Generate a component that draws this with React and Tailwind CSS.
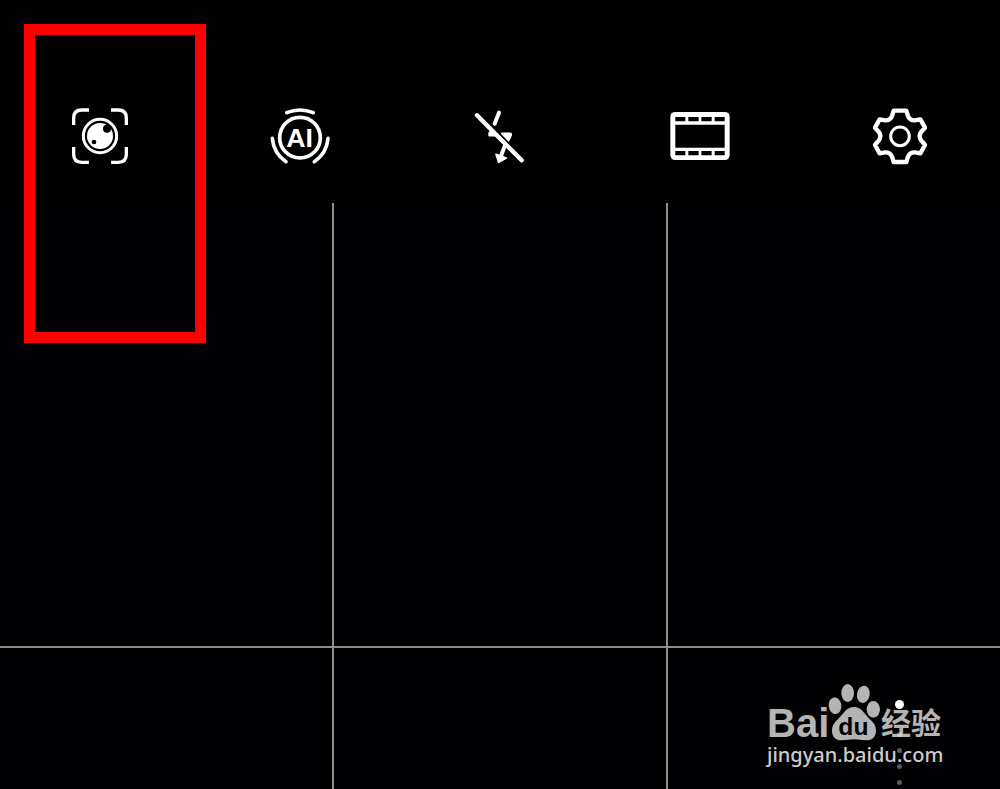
function LensIcon() {
  return (
    <svg viewBox="0 0 240 240" className="size-20" fill="none" stroke="#fff">
      <path
        strokeWidth="10"
        d="M41 87V66Q41 42 65 42H87M153 42H175Q199 42 199 66V87M199 153V175Q199 199 175 199H153M87 199H65Q41 199 41 175V153"
      />
      <circle cx="120" cy="120" r="50" strokeWidth="9" />
      <circle cx="120" cy="120" r="39" fill="#fff" stroke="none" />
      <circle cx="141" cy="98" r="12" fill="#000" stroke="none" />
      <circle cx="102" cy="138" r="7" fill="#000" stroke="none" />
    </svg>
  );
}

function AiIcon() {
  return (
    <svg viewBox="0 0 240 240" className="size-20" fill="none" stroke="#fff" strokeLinecap="round">
      <circle cx="120" cy="125" r="61" strokeWidth="11" />
      <path strokeWidth="11" d="M80 50Q120 34 160 50M37 127Q41 172 78 197M204 127Q200 172 163 197" />
      <text
        x="119"
        y="153"
        fill="#fff"
        stroke="none"
        fontSize="80"
        textAnchor="middle"
        className="font-['Liberation_Sans',sans-serif] font-bold"
      >
        AI
      </text>
    </svg>
  );
}

function FlashOffIcon() {
  return (
    <svg viewBox="0 0 240 240" className="size-20" fill="#fff" stroke="#fff" strokeLinecap="round" strokeLinejoin="round">
      <path strokeWidth="12" d="M117 50L104 83M135 148L123 180" />
      <path strokeWidth="5" d="M94 102L113 119H88Q86 114 88 110ZM125 112H151Q155 114 153 119L146 134ZM108 175L116 199L139 186Z" />
      <path strokeWidth="13" d="M51 58L185 193" />
    </svg>
  );
}

function FilmIcon() {
  return (
    <svg viewBox="0 0 240 240" className="size-20">
      <rect x="31" y="48" width="178" height="144" rx="14" fill="#fff" />
      <path
        fill="#000"
        d="M46 86H194V155H46ZM46 63H76V76H46ZM85 63H116V76H85ZM124 63H155V76H124ZM164 63H194V76H164ZM46 165H76V178H46ZM85 165H116V178H85ZM124 165H155V178H124ZM164 165H194V178H164Z"
      />
    </svg>
  );
}

function GearIcon() {
  return (
    <svg viewBox="0 0 240 240" className="size-20" fill="none" stroke="#fff" strokeLinejoin="round">
      <path
        strokeWidth="13"
        d="M101 44H139L144 60Q149 74 165 73L181 70L195 95L184 107Q174 120 184 134L195 147L181 172L165 169Q149 168 144 182L139 198H101L96 182Q91 168 75 169L59 172L45 147L56 134Q66 120 56 107L45 95L59 70L75 73Q91 74 96 60Z"
      />
      <circle cx="120" cy="121" r="28" strokeWidth="9" />
    </svg>
  );
}

function PawLogo() {
  return (
    <svg viewBox="216 20 162 174" className="h-[58px] w-[54px] shrink-0" fill="#b4b4b4">
      <ellipse cx="240" cy="88" rx="19" ry="25" transform="rotate(-8 240 88)" />
      <ellipse cx="278" cy="50" rx="19" ry="27" />
      <ellipse cx="325" cy="54" rx="19" ry="26" transform="rotate(10 325 54)" />
      <ellipse cx="355" cy="99" rx="20" ry="25" />
      <path d="M297 92C320 92 328 113 343 127C357 139 363 149 363 163C363 182 351 192 334 192C319 192 310 189 297 189C284 189 275 192 260 192C242 192 231 181 231 163C231 149 237 139 250 127C266 113 273 92 297 92Z" />
      <text x="250" y="177" fill="#000" fontSize="74" className="font-['Liberation_Sans',sans-serif] font-bold">
        du
      </text>
    </svg>
  );
}

const tools = [
  { label: 'Lens', Icon: LensIcon },
  { label: 'AI', Icon: AiIcon },
  { label: 'Flash off', Icon: FlashOffIcon },
  { label: 'Film', Icon: FilmIcon },
  { label: 'Settings', Icon: GearIcon },
];

function Toolbar() {
  return (
    <header className="relative grid grid-cols-5 justify-items-center pt-24 pb-[27px]">
      {tools.map(({ label, Icon }) => (
        <button key={label} type="button" aria-label={label} className="size-20">
          <Icon />
        </button>
      ))}
      <div className="pointer-events-none absolute top-6 left-6 z-10 h-[319px] w-[182px] border-[11px] border-[#ff0000]" />
    </header>
  );
}

function Watermark() {
  return (
    <div className="absolute right-[55px] bottom-5 w-[178px]">
      <div className="flex items-end text-[#b4b4b4]">
        <span className="w-[60px] font-['Liberation_Sans',sans-serif] text-[40px] leading-9 font-bold">Bai</span>
        <PawLogo />
        <span className="font-['Noto_Sans_CJK_SC',sans-serif] text-[30px] leading-10 font-bold whitespace-nowrap">经验</span>
      </div>
      <p className="font-['Noto_Sans',sans-serif] text-xl leading-7 font-medium whitespace-nowrap text-[#cccccc]">
        jingyan.baidu.com
      </p>
    </div>
  );
}

function PageDots() {
  return (
    <div className="absolute right-24 bottom-1 flex flex-col items-center gap-[11px]">
      <span className="mb-3 size-[9px] rounded-full bg-white" />
      {[1, 2, 3, 4].map((dot) => (
        <span key={dot} className="size-[5px] rounded-full bg-white/35" />
      ))}
    </div>
  );
}

export default function App() {
  return (
    <main className="flex min-h-screen flex-col overflow-hidden bg-black">
      <Toolbar />
      <section className="relative flex grow">
        <div className="grid grow grid-cols-3 grid-rows-[443px_1fr] gap-0.5 bg-[#8c8c8c]">
          {[1, 2, 3, 4, 5, 6].map((cell) => (
            <div key={cell} className="bg-[#010103]" />
          ))}
        </div>
        <Watermark />
        <PageDots />
      </section>
    </main>
  );
}
